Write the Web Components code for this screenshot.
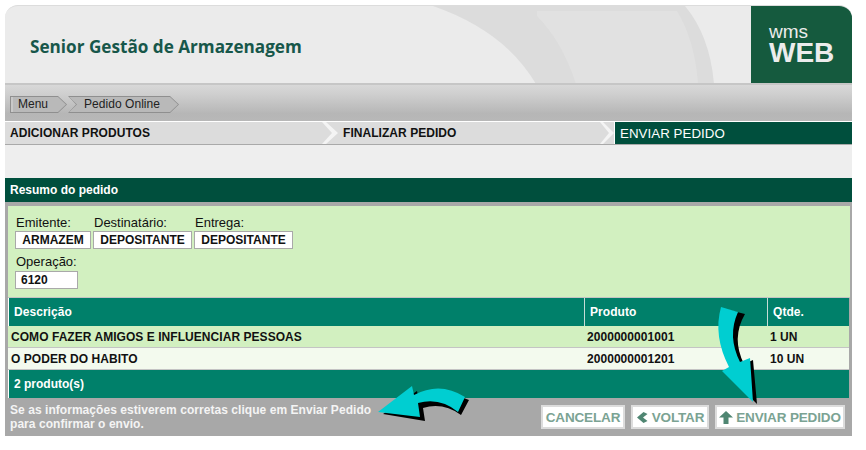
<!DOCTYPE html>
<html lang="pt">
<head>
<meta charset="utf-8">
<title>Pedido Online</title>
<style>
    html, body { margin: 0; padding: 0; background: #fff; }
    body { font-family: "Liberation Sans", Arial, sans-serif; }
</style>
</head>
<body>
<wms-app>
    <wms-header title-text="Senior Gestão de Armazenagem"></wms-header>
    <wms-breadcrumb></wms-breadcrumb>
    <wms-steps></wms-steps>
    <wms-resumo></wms-resumo>
    <wms-acoes></wms-acoes>
</wms-app>
<script>
class WmsApp extends HTMLElement {
    constructor(){
        super();
        this.attachShadow({ mode: 'open' });
        this.shadowRoot.innerHTML = /*html*/`
        <style>
            :host {
                display: block;
                position: relative;
                width: 847px;
                margin: 5px 0 0 5px;
            }
            svg { position: absolute; left: -5px; top: -5px; pointer-events: none; }
        </style>
        <slot></slot>
        <!--Setas por cima da tela-->
        <svg width="866" height="450" viewBox="0 0 866 450">
            <path fill="#000" d="M725 309 L745 314 Q731 338 744 364 L753 360 L757 404 L726 373 L733 369 Q716 338 725 309Z"/>
            <path fill="#00ced1" d="M721 307 L738 312 Q727 336 740 362 L750 358 L753 402 L722 371 L729 367 Q713 336 721 307Z"/>
            <path fill="#000" d="M383 414 L417 391 L419 400 Q443 388 469 400 L461 415 Q443 402 423 408 L425 421Z"/>
            <path fill="#00ced1" d="M378 412 L412 386 L414 395 Q440 381 465 397 L458 412 Q440 397 418 403 L420 417Z"/>
        </svg>
        `;
    }
}

class WmsHeader extends HTMLElement {
    constructor(){
        super();
        this.attachShadow({ mode: 'open' });
        this.shadowRoot.innerHTML = /*html*/`
        <style>
            :host {
                display: flex;
                box-sizing: border-box;
                height: 80px;
                border-top: 1px solid #dcdcdc;
                border-bottom: 2px solid #c6c6c6;
                background: #ebebeb;
                border-radius: 13px 13px 0 0;
                overflow: hidden;
                position: relative;
            }
            .title {
                flex: 1;
                display: flex;
                align-items: center;
                padding: 4px 0 0 25px;
                font: 700 17.15px "Open Sans", sans-serif;
                color: #17574a;
                position: relative;
            }
            .fundo { position: absolute; left: 0; top: 0; }
            .logo {
                width: 101px;
                flex: none;
                box-sizing: border-box;
                padding: 18px 0 0 18px;
                background: #155a3e;
                color: #ececec;
                font-family: "Liberation Sans", sans-serif;
                position: relative;
            }
            .logo small { display: block; font-size: 19px; line-height: 15px; margin-bottom: 3px; }
            .logo b { display: block; font-size: 28px; line-height: 22px; }
        </style>
        <svg class="fundo" width="746" height="79" viewBox="0 0 746 79">
            <path fill="#dcdcdc" d="M428 0 H680 Q705 30 709 78 H531 Q500 25 428 0Z"/>
            <path fill="#e1e1e1" d="M532 5 H672 Q690 35 693 78 H571 Q557 35 532 10Z"/>
        </svg>
        <div class="title">${this.getAttribute('title-text')}</div>
        <div class="logo"><small>wms</small><b>WEB</b></div>
        `;
    }
}

class WmsBreadcrumb extends HTMLElement {
    constructor(){
        super();
        this.attachShadow({ mode: 'open' });
        this.shadowRoot.innerHTML = /*html*/`
        <style>
            :host {
                display: flex;
                align-items: center;
                height: 36px;
                box-sizing: border-box;
                padding: 3px 0 0 5px;
                background: linear-gradient(#d8d8d8, #cfcfcf 25%, #b6b6b6 80%, #b8b8b8);
                font-size: 12px;
                color: #222;
            }
            .item {
                display: block;
                height: 17px;
                padding: 1px;
                box-sizing: border-box;
                background: #8f8f8f;
            }
            .item span {
                display: block;
                height: 15px;
                line-height: 14px;
                box-sizing: border-box;
                background: #b9b9b9;
            }
            .a { width: 57px; clip-path: polygon(0 0, 48px 0, 100% 50%, 48px 100%, 0 100%); margin-right: 1px; }
            .a span { padding-left: 5px; border-left: 2px solid #c9c9c9; clip-path: polygon(0 0, 47px 0, 100% 50%, 47px 100%, 0 100%); }
            .b { width: 111px; clip-path: polygon(0 0, 102px 0, 100% 50%, 102px 100%, 0 100%, 8px 50%); }
            .b span { padding-left: 15px; letter-spacing: .05px; clip-path: polygon(0 0, 101px 0, 100% 50%, 101px 100%, 0 100%, 8px 50%); }
        </style>
        <div class="item a"><span>Menu</span></div>
        <div class="item b"><span>Pedido Online</span></div>
        `;
    }
}

class WmsSteps extends HTMLElement {
    constructor(){
        super();
        this.attachShadow({ mode: 'open' });
        this.shadowRoot.innerHTML = /*html*/`
        <style>
            :host {
                display: grid;
                grid-template-columns: 333px 276px 1fr;
                height: 23px;
                margin-top: 1px;
                box-sizing: border-box;
                border-bottom: 1px solid #a9a9a9;
                background: #dcdcdc;
                font-size: 12px;
                font-weight: bold;
                color: #111;
            }
            .step { display: flex; align-items: center; justify-content: space-between; line-height: 21px; }
            .step span { padding-left: 5px; letter-spacing: .05px; }
            svg { display: block; flex: none; }
            .last {
                background: #004f3d;
                color: #fff;
                font-weight: normal;
                font-size: 13.3px;
                border-left: 1px solid #fff;
            }
        </style>
        <div class="step"><span>ADICIONAR PRODUTOS</span>
            <svg width="16" height="22"><path fill="#f4f4f4" d="M0 0H4L16 11 4 22H0L10 11Z"/></svg></div>
        <div class="step"><span>FINALIZAR PEDIDO</span>
            <svg width="14" height="22"><path fill="#f4f4f4" d="M0 0H3L14 11 3 22H0L9 11Z"/></svg></div>
        <div class="step last"><span>ENVIAR PEDIDO</span></div>
        `;
    }
}

class WmsResumo extends HTMLElement {
    constructor(){
        super();
        this.attachShadow({ mode: 'open' });
        this.shadowRoot.innerHTML = /*html*/`
        <style>
            :host {
                display: block;
                padding-top: 33px;
                background: #eee;
                font-size: 12px;
                color: #111;
            }
            .titulo {
                height: 24px;
                line-height: 25px;
                padding-left: 5px;
                background: #004f3d;
                color: #fff;
                font-weight: bold;
            }
            .painel {
                border: solid #a8a8a8;
                border-width: 3px 0 0 3px;
                background: #a8a8a8;
                padding-top: 1px;
            }
            .dados {
                height: 92px;
                box-sizing: border-box;
                padding: 7px 0 0 7px;
                background: #d2f0c0;
                margin-right: 2px;
                border-bottom: 1px solid #c4c4c4;
            }
            .campos { display: flex; gap: 2px; }
            .campo label { display: block; height: 18px; line-height: 19px; padding-left: 1px; font-size: 13px; }
            .caixa {
                box-sizing: border-box;
                height: 18px;
                line-height: 16px;
                border: 1px solid #a9a9a9;
                background: #fff;
                font-weight: bold;
                text-align: center;
            }
            .op { margin-top: 4px; }
            .op label { line-height: 17px !important; }
            .op .caixa { width: 63px; text-align: left; padding-left: 5px; }
            .linha {
                display: grid;
                grid-template-columns: 576px 183px 1fr;
                margin-right: 3px;
                font-weight: bold;
            }
            .linha > div { padding-left: 3px; overflow: hidden; white-space: nowrap; letter-spacing: .05px; }
            .cab {
                grid-template-columns: 575px 183px 1fr;
                height: 28px;
                line-height: 29px;
                background: #00806a;
                color: #fff;
                border-left: 1px solid #fff;
            }
            .cab > div { padding-left: 5px; }
            .cab > div + div { border-left: 1px solid #c6dcd6; }
            .r1, .r2 { height: 22px; line-height: 23px; border-bottom: 1px solid #c4c4c4; box-sizing: border-box; }
            .r1 { background: #d2f0c0; }
            .r2 { background: #f3faee; }
            .total {
                height: 28px;
                line-height: 29px;
                margin-right: 3px;
                padding-left: 5px;
                background: #00806a;
                color: #fff;
                font-weight: bold;
                border-left: 1px solid #fff;
            }
        </style>
        <div class="titulo">Resumo do pedido</div>
        <div class="painel">
            <div class="dados">
                <div class="campos">
                    <div class="campo"><label>Emitente:</label><div class="caixa" style="width:76px">ARMAZEM</div></div>
                    <div class="campo"><label>Destinatário:</label><div class="caixa" style="width:99px">DEPOSITANTE</div></div>
                    <div class="campo"><label>Entrega:</label><div class="caixa" style="width:99px">DEPOSITANTE</div></div>
                </div>
                <div class="campo op"><label>Operação:</label><div class="caixa">6120</div></div>
            </div>
            <div class="linha cab"><div>Descrição</div><div>Produto</div><div>Qtde.</div></div>
            <div class="linha r1"><div>COMO FAZER AMIGOS E INFLUENCIAR PESSOAS</div><div>2000000001001</div><div>1 UN</div></div>
            <div class="linha r2"><div>O PODER DO HABITO</div><div>2000000001201</div><div>10 UN</div></div>
            <div class="total">2 produto(s)</div>
        </div>
        `;
    }
}

class WmsAcoes extends HTMLElement {
    constructor(){
        super();
        this.attachShadow({ mode: 'open' });
        this.shadowRoot.innerHTML = /*html*/`
        <style>
            :host {
                display: flex;
                justify-content: space-between;
                height: 38px;
                box-sizing: border-box;
                padding: 5px 7px 0 5px;
                background: #a8a8a8;
            }
            p {
                margin: 0;
                color: #f4f4f4;
                font-size: 12px;
                font-weight: bold;
                line-height: 14px;
                letter-spacing: .05px;
            }
            .botoes { display: flex; gap: 6px; padding-top: 2px; }
            button {
                display: flex;
                align-items: center;
                justify-content: center;
                gap: 3px;
                height: 24px;
                box-sizing: border-box;
                padding: 0;
                border: 2px solid #dcdcdc;
                background: #fff;
                color: #7ba393;
                font: bold 13.5px "Liberation Sans", sans-serif;
                letter-spacing: -.15px;
                white-space: nowrap;
            }
            svg { display: block; flex: none; }
        </style>
        <p>Se as informações estiverem corretas clique em Enviar Pedido<br>para confirmar o envio.</p>
        <div class="botoes">
            <button type="button" style="width:84px">CANCELAR</button>
            <button type="button" style="width:78px">
                <svg width="13" height="13" viewBox="0 0 13 13"><path fill="#4f8672" d="M7.5 1 L11.5 3 L7 6.5 L11.5 10 L7.5 12 L1 6.5Z"/></svg>VOLTAR</button>
            <button type="button" style="width:130px">
                <svg width="14" height="13" viewBox="0 0 14 13"><path fill="#4f8672" d="M7 0 L14 6.5 H9.5 V13 H4.5 V6.5 H0Z"/></svg>ENVIAR PEDIDO</button>
        </div>
        `;
    }
}

customElements.define('wms-app', WmsApp);
customElements.define('wms-header', WmsHeader);
customElements.define('wms-breadcrumb', WmsBreadcrumb);
customElements.define('wms-steps', WmsSteps);
customElements.define('wms-resumo', WmsResumo);
customElements.define('wms-acoes', WmsAcoes);
</script>
</body>
</html>
